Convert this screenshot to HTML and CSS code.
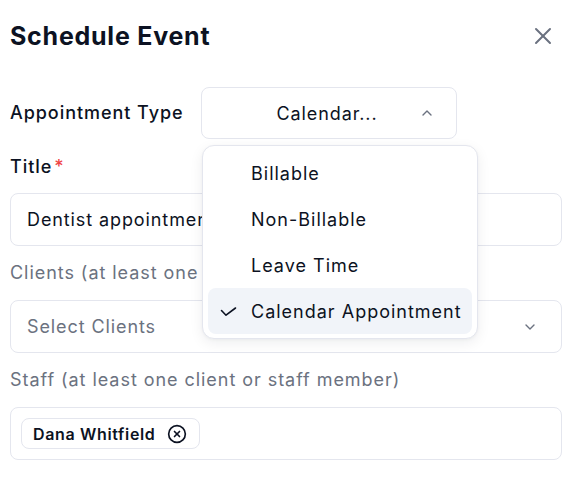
FILE: index.html
```html
<!DOCTYPE html>
<html>
<head>
<meta charset="utf-8">
<link rel="stylesheet" href="styles.css">
</head>
<body>
<div class="modal">
  <div class="header">
    <h1 class="title">Schedule Event</h1>
    <button class="close" aria-label="Close">
      <svg width="28" height="28" viewBox="0 0 24 24" fill="none" stroke="currentColor" stroke-width="1.7" stroke-linecap="round"><path d="M18 6 6 18"/><path d="m6 6 12 12"/></svg>
    </button>
  </div>

  <div class="type-row">
    <span class="label strong">Appointment Type</span>
    <div class="select-wrap">
      <div class="select">
        <span class="select-text">Calendar...</span>
        <svg class="chev" width="10" height="6" viewBox="0 0 10 6" fill="none" stroke="currentColor" stroke-width="1.4" stroke-linecap="round" stroke-linejoin="round"><path d="M1 5 5 1l4 4"/></svg>
      </div>
      <div class="menu">
        <div class="item"><span class="check-slot"></span>Billable</div>
        <div class="item"><span class="check-slot"></span>Non-Billable</div>
        <div class="item"><span class="check-slot"></span>Leave Time</div>
        <div class="item active"><span class="check-slot"><svg width="17" height="11" viewBox="0 0 17 11" fill="none" stroke="currentColor" stroke-width="1.6" stroke-linecap="round" stroke-linejoin="round"><path d="M1.5 4.5 6 9.2 15.5 2"/></svg></span>Calendar Appointment</div>
      </div>
    </div>
  </div>

  <div class="field">
    <span class="label strong title-label">Title<span class="req">*</span></span>
    <div class="input">Dentist appointment</div>
  </div>

  <div class="field">
    <span class="label muted">Clients (at least one client or staff member)</span>
    <div class="input between">
      <span class="placeholder">Select Clients</span>
      <svg class="chev" width="10" height="6" viewBox="0 0 10 6" fill="none" stroke="currentColor" stroke-width="1.4" stroke-linecap="round" stroke-linejoin="round"><path d="M1 1l4 4 4-4"/></svg>
    </div>
  </div>

  <div class="field">
    <span class="label muted">Staff (at least one client or staff member)</span>
    <div class="input chips">
      <span class="chip">Dana Whitfield
        <svg width="20" height="20" viewBox="0 0 24 24" fill="none" stroke="currentColor" stroke-width="2" stroke-linecap="round" stroke-linejoin="round"><circle cx="12" cy="12" r="10"/><path d="m15 9-6 6"/><path d="m9 9 6 6"/></svg>
      </span>
    </div>
  </div>
</div>
</body>
</html>
```

FILE: styles.css
```css
* { box-sizing: border-box; }
html, body { margin: 0; padding: 0; background: #ffffff; }
body {
  font-family: Inter, "Noto Sans", "Liberation Sans", sans-serif;
  color: #0c1222;
}
.modal {
  width: 582px;
  padding: 16px 20px 0 10px;
}
.header {
  display: flex;
  justify-content: space-between;
  align-items: center;
  height: 40px;
}
.title {
  margin: 0;
  font-size: 25px;
  font-weight: 700;
  line-height: 32px;
  letter-spacing: 0.75px;
}
.close {
  width: 40px;
  height: 40px;
  margin-right: -1px;
  border: 0;
  background: transparent;
  color: #6b7280;
  padding: 0;
  display: flex;
  align-items: center;
  justify-content: center;
}
.type-row {
  margin-top: 31px;
  display: grid;
  grid-template-columns: 191px 256px;
  align-items: center;
}
.label {
  font-size: 18px;
  line-height: 28px;
  letter-spacing: 0.95px;
  white-space: nowrap;
}
.title-label { padding-top: 2px; line-height: 26px; }
.strong { font-weight: 500; color: #0c1222; }
.muted { color: #6b7280; font-weight: 400; }
.req { color: #ef4444; margin-left: 2px; font-size: 18px; }
.select-wrap { position: relative; }
.select {
  height: 52px;
  border: 1px solid #e4e6ee;
  border-radius: 8px;
  display: flex;
  align-items: center;
  padding: 0 24px 0 30px;
  font-size: 18px;
  letter-spacing: 0.9px;
}
.select-text { flex: 1; text-align: center; }
.chev { color: #6b7280; flex: none; }
.menu {
  position: absolute;
  left: 1px;
  top: 58px;
  width: 276px;
  background: #fff;
  border: 1px solid #e4e6ee;
  border-radius: 12px;
  padding: 4px 5px;
  box-shadow: 0 4px 14px rgba(15, 23, 42, 0.07), 0 1px 3px rgba(15, 23, 42, 0.04);
  z-index: 2;
}
.item {
  height: 46px;
  display: flex;
  align-items: center;
  padding-left: 12px;
  font-size: 18px;
  letter-spacing: 1px;
  color: #0c1222;
  border-radius: 8px;
  white-space: nowrap;
}
.item.active { background: #f1f4f9; }
.check-slot {
  width: 17px;
  height: 11px;
  margin-right: 14px;
  display: flex;
  color: #0c1222;
}
.field {
  margin-top: 13px;
  display: flex;
  flex-direction: column;
  gap: 13px;
}
.input {
  height: 53px;
  border: 1px solid #e4e6ee;
  border-radius: 8px;
  display: flex;
  align-items: center;
  padding: 0 16px;
  font-size: 18px;
  letter-spacing: 0.9px;
  color: #0c1222;
  white-space: nowrap;
}
.between { justify-content: space-between; padding-right: 26px; }
.placeholder { color: #6b7280; }
.chips { padding: 0 10px; }
.chip {
  height: 31px;
  border: 1px solid #e4e6ee;
  border-radius: 8px;
  display: inline-flex;
  align-items: center;
  gap: 12px;
  padding: 0 12px 0 11px;
  font-size: 16px;
  font-weight: 600;
  letter-spacing: 0.65px;
}
```
